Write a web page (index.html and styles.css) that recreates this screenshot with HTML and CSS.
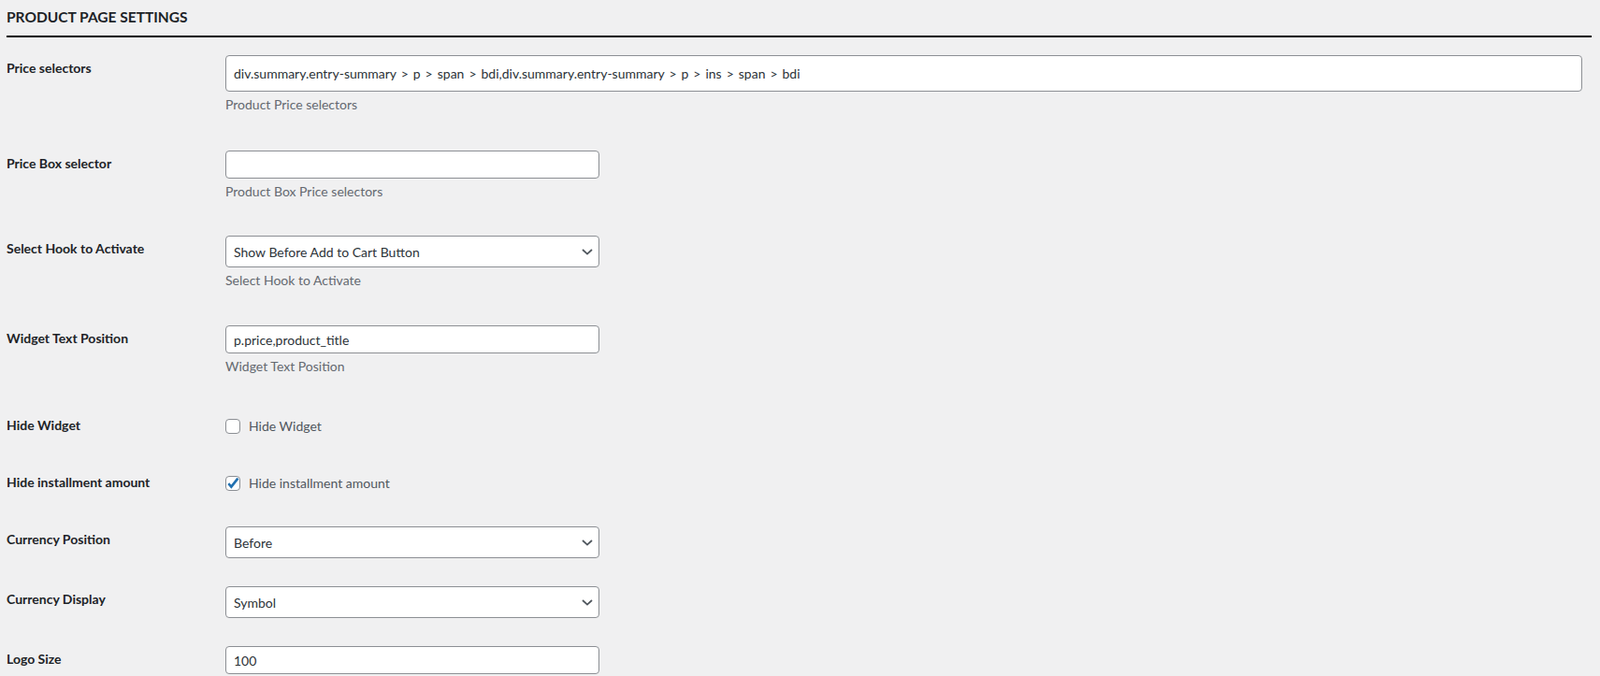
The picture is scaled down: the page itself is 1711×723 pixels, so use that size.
FILE: index.html
```html
<!DOCTYPE html>
<html>
  <head>
    <meta charset="UTF-8">
    <title>Product Page Settings</title>
    <link rel="stylesheet" href="styles.css">
  </head>
  <body>
    <div class="wrap">
      <h2 class="section-title">PRODUCT PAGE SETTINGS</h2>

      <div class="form-table">
        <div class="form-row row-h102">
          <div class="row-label">Price selectors</div>
          <div class="row-field">
            <input type="text" class="text-input wide" value="div.summary.entry-summary &gt; p &gt; span &gt; bdi,div.summary.entry-summary &gt; p &gt; ins &gt; span &gt; bdi">
            <p class="description">Product Price selectors</p>
          </div>
        </div>

        <div class="form-row row-h91">
          <div class="row-label">Price Box selector</div>
          <div class="row-field">
            <input type="text" class="text-input" value="">
            <p class="description">Product Box Price selectors</p>
          </div>
        </div>

        <div class="form-row row-h96">
          <div class="row-label">Select Hook to Activate</div>
          <div class="row-field">
            <div class="select-wrap">
              <select class="select-input">
                <option>Show Before Add to Cart Button</option>
              </select>
              <svg class="select-arrow" width="12" height="7" viewBox="0 0 12 7"><path d="M1 1l5 4.6L11 1" fill="none" stroke="#50575e" stroke-width="1.8"/></svg>
            </div>
            <p class="description">Select Hook to Activate</p>
          </div>
        </div>

        <div class="form-row row-h96">
          <div class="row-label">Widget Text Position</div>
          <div class="row-field">
            <input type="text" class="text-input" value="p.price,product_title">
            <p class="description">Widget Text Position</p>
          </div>
        </div>

        <div class="form-row row-h61 row-check">
          <div class="row-label">Hide Widget</div>
          <div class="row-field">
            <label class="check-label"><span class="checkbox"></span>Hide Widget</label>
          </div>
        </div>

        <div class="form-row row-h58 row-check">
          <div class="row-label">Hide installment amount</div>
          <div class="row-field">
            <label class="check-label"><span class="checkbox"><svg width="14" height="14" viewBox="0 0 14 14"><path d="M2.3 7.2l3 3.4L12.4 1.6" fill="none" stroke="#2271b1" stroke-width="2.6"/></svg></span>Hide installment amount</label>
          </div>
        </div>

        <div class="form-row row-h64">
          <div class="row-label">Currency Position</div>
          <div class="row-field">
            <div class="select-wrap">
              <select class="select-input">
                <option>Before</option>
              </select>
              <svg class="select-arrow" width="12" height="7" viewBox="0 0 12 7"><path d="M1 1l5 4.6L11 1" fill="none" stroke="#50575e" stroke-width="1.8"/></svg>
            </div>
          </div>
        </div>

        <div class="form-row row-h64">
          <div class="row-label">Currency Display</div>
          <div class="row-field">
            <div class="select-wrap">
              <select class="select-input">
                <option>Symbol</option>
              </select>
              <svg class="select-arrow" width="12" height="7" viewBox="0 0 12 7"><path d="M1 1l5 4.6L11 1" fill="none" stroke="#50575e" stroke-width="1.8"/></svg>
            </div>
          </div>
        </div>

        <div class="form-row row-h64">
          <div class="row-label">Logo Size</div>
          <div class="row-field">
            <input type="text" class="text-input" value="100">
          </div>
        </div>
      </div>
    </div>
  </body>
</html>
```

FILE: styles.css
```css
body {
  margin:0;
  background-color:#f0f0f1;
  font-family:Lato, "Open Sans", sans-serif;
  font-size:14px;
  color:#1d2327;
}
.wrap {
  padding:0 9px 0 7px;
}
.section-title {
  margin:0;
  padding:8px 0 10px;
  font-size:15.5px;
  line-height:20px;
  font-weight:700;
  border-bottom:2px solid #000;
}
.form-table {
  padding-top:3px;
}
.form-row {
  display:grid;
  grid-template-columns:234px 1fr;
  align-items:start;
  padding-top:16px;
  box-sizing:border-box;
}
.row-h102 { min-height:102px; }
.row-h96 { min-height:96px; }
.row-h91 { min-height:91px; }
.row-h64 { min-height:64px; }
.row-h61 { min-height:61px; }
.row-h58 { min-height:58px; }
.row-label {
  padding-top:4px;
  line-height:20px;
  font-size:14px;
  font-weight:700;
}
.row-check .row-label {
  padding-top:1px;
}
.row-check .row-field {
  padding-top:2px;
}
.row-field {
  padding-right:10px;
}
.text-input {
  display:block;
  box-sizing:border-box;
  width:400px;
  height:30px;
  margin:0;
  padding:0 8px;
  border:1px solid #8c8f94;
  border-radius:4px;
  background-color:#fff;
  font-family:inherit;
  font-size:14px;
  color:#2c3338;
}
.text-input.wide {
  width:100%;
  height:39px;
  word-spacing:1.4px;
}
.select-wrap {
  position:relative;
  width:400px;
}
.select-input {
  display:block;
  box-sizing:border-box;
  width:100%;
  height:34px;
  margin:0;
  padding:0 24px 0 8px;
  border:1px solid #8c8f94;
  border-radius:4px;
  background-color:#fff;
  -webkit-appearance:none;
  appearance:none;
  font-family:inherit;
  font-size:14px;
  color:#2c3338;
}
.select-arrow {
  position:absolute;
  right:7px;
  top:14px;
}
.description {
  margin:4px 0 0;
  line-height:20px;
  color:#646970;
}
.check-label {
  display:flex;
  align-items:center;
  gap:9px;
  line-height:20px;
  color:#50575e;
}
.checkbox {
  display:flex;
  align-items:center;
  justify-content:center;
  box-sizing:border-box;
  width:16px;
  height:16px;
  border:1px solid #8c8f94;
  border-radius:4px;
  background-color:#fff;
}
```
